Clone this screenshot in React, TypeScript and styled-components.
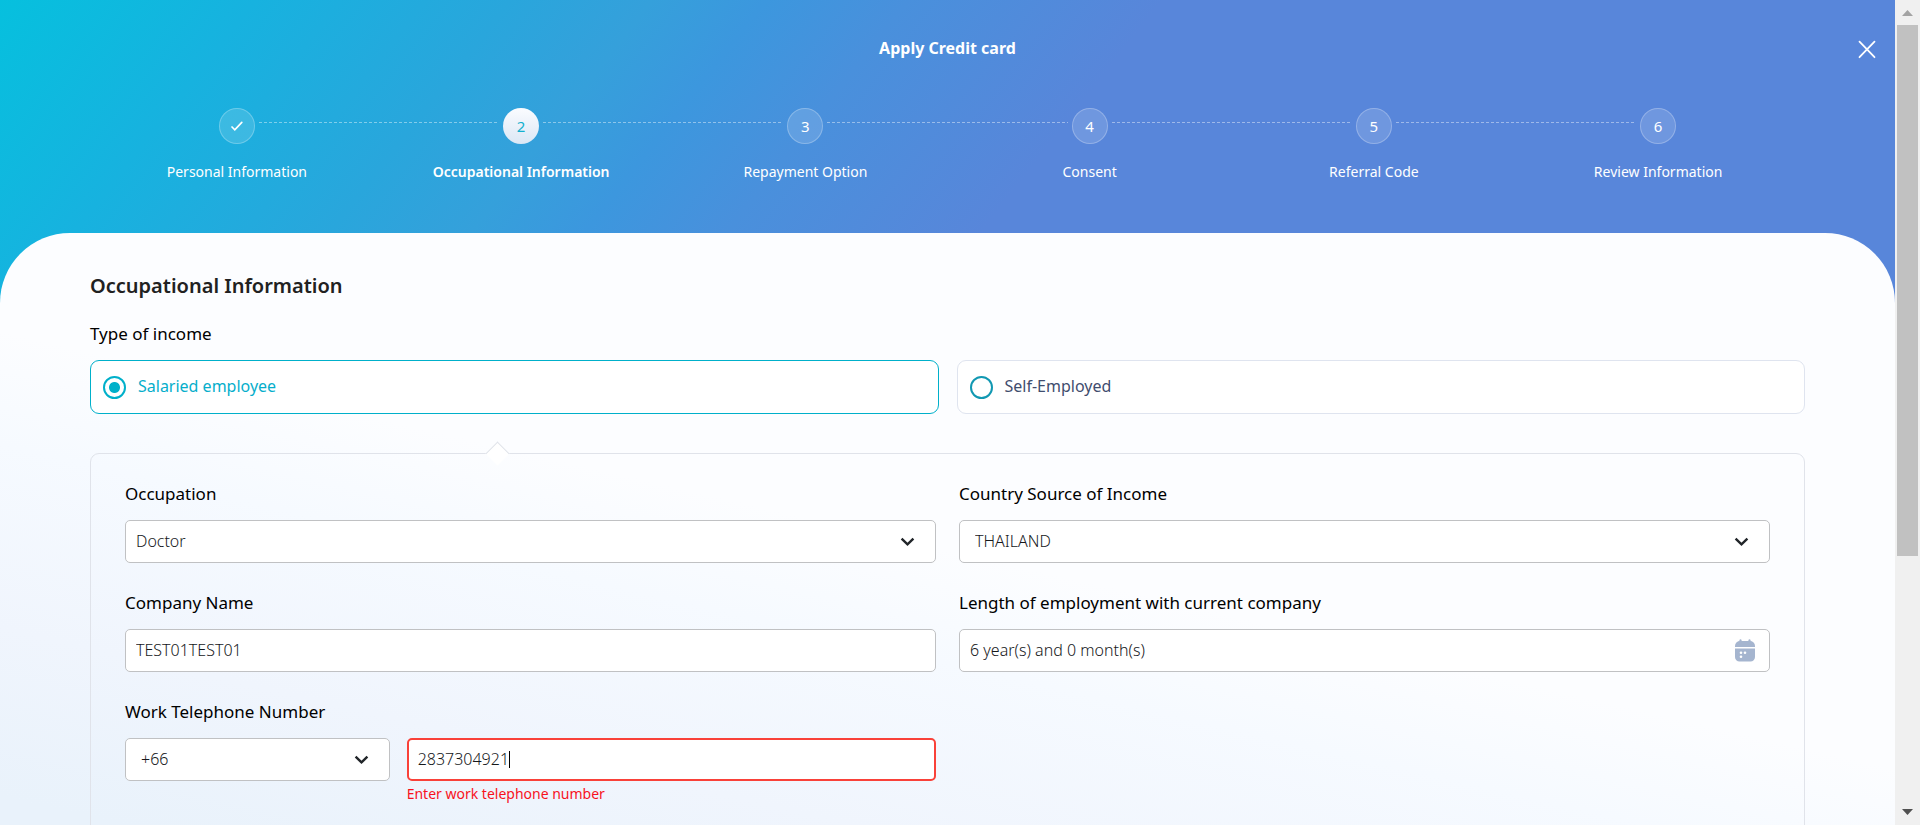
import React, { useState } from 'react';
import styled, { createGlobalStyle, css } from 'styled-components';

const GlobalStyle = createGlobalStyle`
  *, *::before, *::after { box-sizing: border-box; }
  body {
    margin: 0;
    color: #000;
    font-family: 'Noto Sans', 'Open Sans', sans-serif;
    font-size: 16px;
    line-height: 24px;
  }
  button, input, select { font: inherit; color: inherit; margin: 0; }
`;

const Shell = styled.div`
  display: flex;
  height: 100vh;
`;

const Scroller = styled.main`
  flex: 1;
  min-width: 0;
  overflow-y: auto;
  scrollbar-width: none;
`;

const Page = styled.div`
  display: flex;
  flex-direction: column;
  min-height: 146vh;
  background: linear-gradient(
    128deg,
    #06c0de 0%,
    #17b2df 9%,
    #29a6dc 18%,
    #35a0db 23%,
    #3c97de 27%,
    #4990dc 32%,
    #5886da 41%
  );
`;

const Header = styled.header`
  position: relative;
  padding: 36px 0 49px;
  color: #fff;
`;

const Title = styled.h1`
  margin: 0 0 48px;
  font-size: 16px;
  line-height: 24px;
  font-weight: 700;
  text-align: center;
`;

const CloseButton = styled.button`
  position: absolute;
  top: 37px;
  right: 16px;
  display: flex;
  padding: 0;
  border: 0;
  background: none;
  cursor: pointer;
`;

const Steps = styled.ol`
  display: grid;
  grid-template-columns: repeat(6, 1fr);
  margin: 0 5%;
  padding: 0;
  list-style: none;
`;

const Step = styled.li<{ $current?: boolean }>`
  position: relative;
  display: flex;
  flex-direction: column;
  align-items: center;
  gap: 16px;
  font-size: 14px;
  font-weight: ${(p) => (p.$current ? 600 : 400)};

  &:not(:last-child)::after {
    content: '';
    position: absolute;
    top: 14px;
    left: calc(50% + 22px);
    width: calc(100% - 44px);
    height: 1px;
    background: repeating-linear-gradient(90deg, rgba(255, 255, 255, 0.42) 0 3px, transparent 3px 5px);
  }
`;

const Bubble = styled.span<{ $current?: boolean }>`
  display: flex;
  align-items: center;
  justify-content: center;
  width: 36px;
  height: 36px;
  border: 1px solid rgba(255, 255, 255, 0.25);
  border-radius: 50%;
  background: rgba(255, 255, 255, 0.14);
  font-size: 15px;
  font-weight: 400;
  ${(p) =>
    p.$current &&
    css`
      border-color: transparent;
      background: linear-gradient(#fbfcff, #dbe7f5) border-box;
      color: #12b0cf;
    `}
`;

const Sheet = styled.section`
  flex: 1;
  display: flex;
  flex-direction: column;
  padding: 38px 90px 60px;
  border-radius: 70px 70px 0 0;
  background: linear-gradient(193deg, #fcfdff 38%, #f6faff 46%, #f0f5fd 59%, #e9f2fb 71%);
`;

const SectionTitle = styled.h2`
  margin: 0 0 21px;
  color: #212121;
  font-size: 20px;
  line-height: 30px;
  font-weight: 600;
`;

const GroupLabel = styled.div`
  margin-bottom: 14px;
  font-size: 17px;
  line-height: 24px;
`;

const IncomeTypes = styled.div`
  display: grid;
  grid-template-columns: 1fr 1fr;
  gap: 18px;
`;

const IncomeCard = styled.label<{ $selected: boolean }>`
  display: flex;
  align-items: center;
  gap: 12px;
  height: 54px;
  padding: 0 12px 2px;
  border: 1px solid ${(p) => (p.$selected ? '#00b0ca' : '#dfe4ef')};
  border-radius: 9px;
  background: #fff;
  color: ${(p) => (p.$selected ? '#05aecb' : '#3f4d6e')};
  cursor: pointer;
`;

const Radio = styled.input`
  appearance: none;
  position: relative;
  top: 1px;
  width: 23px;
  height: 23px;
  border: 2px solid #1198b2;
  border-radius: 50%;
  background: #fff;

  &:checked {
    border-color: #00b0ca;
    background: radial-gradient(circle, #00b0ca 5px, #fff 6px);
  }
`;

const IncomePanel = styled.div`
  position: relative;
  flex: 1;
  margin-top: 39px;
  padding: 28px 34px;
  border: 1px solid #e0e3ea;
  border-radius: 9px;

  &::before {
    content: '';
    position: absolute;
    top: -9px;
    left: 23%;
    margin-left: 4px;
    width: 17px;
    height: 17px;
    border: solid #e0e3ea;
    border-width: 1px 0 0 1px;
    background: #fff;
    transform: rotate(45deg);
  }
`;

const FormGrid = styled.div`
  display: grid;
  grid-template-columns: 1fr 1fr;
  gap: 28px 23px;
`;

const Label = styled.label`
  display: block;
  margin-bottom: 14px;
  font-size: 17px;
  line-height: 24px;
`;

const Control = styled.div`
  position: relative;
`;

const box = css`
  display: block;
  width: 100%;
  height: 43px;
  border: 1px solid #c0c1c3;
  border-radius: 5px;
  background: #fff;
  color: #16181b;
  font-weight: 300;
  outline: none;
`;

const TextInput = styled.input<{ $invalid?: boolean }>`
  ${box}
  padding: 0 10px 2px;
  ${(p) =>
    p.$invalid &&
    css`
      padding: 0 9px 2px;
      border: 2px solid #f94139;
      caret-color: transparent;
    `}
`;

const Caret = styled.span`
  position: absolute;
  top: 13px;
  left: 102px;
  width: 1px;
  height: 17px;
  background: #000;
  pointer-events: none;
`;

const Select = styled.select<{ $indent?: boolean }>`
  ${box}
  appearance: none;
  padding: 0 48px 2px ${(p) => (p.$indent ? 15 : 10)}px;
  cursor: pointer;
`;

const ChevronSvg = styled.svg`
  position: absolute;
  top: 16px;
  right: 21px;
  pointer-events: none;
`;

const CalendarSvg = styled.svg`
  position: absolute;
  top: 10px;
  right: 14px;
  pointer-events: none;
`;

const PhoneRow = styled.div`
  display: grid;
  grid-template-columns: 1fr 2fr;
  gap: 17px;
`;

const ErrorText = styled.p`
  margin: 3px 0 0;
  color: #f8121d;
  font-size: 14px;
  line-height: 20px;
`;

const Track = styled.div`
  display: flex;
  flex-direction: column;
  align-items: center;
  width: 25px;
  padding: 10px 0;
  background: #f0f0f0;
`;

const Thumb = styled.div`
  width: 21px;
  height: 66%;
  margin: 9px 0 auto;
  background: #c1c1c1;
`;

function Chevron() {
  return (
    <ChevronSvg width="15" height="12" viewBox="0 0 15 12" aria-hidden="true">
      <path d="M1.6 2.6 7.5 8.4 13.4 2.6" fill="none" stroke="#212529" strokeWidth="2.4" />
    </ChevronSvg>
  );
}

function Calendar() {
  return (
    <CalendarSvg width="22" height="23" viewBox="0 0 22 23" aria-hidden="true">
      <g fill="#a5b5cf">
        <rect x="5.5" y="0.3" width="2" height="5" rx="1" />
        <rect x="14.5" y="0.3" width="2" height="5" rx="1" />
        <path d="M1 8V7a5 5 0 0 1 5-5h10a5 5 0 0 1 5 5v1z" />
        <path d="M1 9.4h20V18a4.5 4.5 0 0 1-4.5 4.5h-11A4.5 4.5 0 0 1 1 18z" />
      </g>
      <g fill="#fff">
        <circle cx="7" cy="13.7" r="1.3" />
        <circle cx="11" cy="13.7" r="1.3" />
        <circle cx="7" cy="17.7" r="1.3" />
      </g>
    </CalendarSvg>
  );
}

const steps = [
  'Personal Information',
  'Occupational Information',
  'Repayment Option',
  'Consent',
  'Referral Code',
  'Review Information',
];
const currentStep = 1;

const incomeTypes = ['Salaried employee', 'Self-Employed'];

export default function App() {
  const [income, setIncome] = useState(incomeTypes[0]);
  return (
    <>
      <GlobalStyle />
      <Shell>
        <Scroller>
          <Page>
            <Header>
              <Title>Apply Credit card</Title>
              <CloseButton type="button" aria-label="Close">
                <svg width="24" height="24" viewBox="0 0 24 24" fill="none" stroke="#fff" strokeWidth="1.8" strokeLinecap="round">
                  <path d="M4.5 4.7l15 15.5M19.5 4.7l-15 15.5" />
                </svg>
              </CloseButton>
              <Steps>
                {steps.map((name, i) => (
                  <Step key={name} $current={i === currentStep} aria-current={i === currentStep ? 'step' : undefined}>
                    <Bubble $current={i === currentStep}>
                      {i < currentStep ? (
                        <svg width="14" height="12" viewBox="0 0 14 12" fill="none" stroke="#fff" strokeWidth="1.7" strokeLinecap="round">
                          <path d="M2 7 4.8 9.8 11.8 2.4" />
                        </svg>
                      ) : (
                        i + 1
                      )}
                    </Bubble>
                    {name}
                  </Step>
                ))}
              </Steps>
            </Header>

            <Sheet>
              <SectionTitle>Occupational Information</SectionTitle>
              <GroupLabel id="income-type">Type of income</GroupLabel>
              <IncomeTypes role="radiogroup" aria-labelledby="income-type">
                {incomeTypes.map((type) => (
                  <IncomeCard key={type} $selected={income === type}>
                    <Radio type="radio" name="income" checked={income === type} onChange={() => setIncome(type)} />
                    {type}
                  </IncomeCard>
                ))}
              </IncomeTypes>

              <IncomePanel>
                <FormGrid>
                  <div>
                    <Label htmlFor="occupation">Occupation</Label>
                    <Control>
                      <Select id="occupation">
                        <option>Doctor</option>
                      </Select>
                      <Chevron />
                    </Control>
                  </div>
                  <div>
                    <Label htmlFor="country">Country Source of Income</Label>
                    <Control>
                      <Select id="country" $indent>
                        <option>THAILAND</option>
                      </Select>
                      <Chevron />
                    </Control>
                  </div>
                  <div>
                    <Label htmlFor="company">Company Name</Label>
                    <TextInput id="company" type="text" defaultValue="TEST01TEST01" />
                  </div>
                  <div>
                    <Label htmlFor="length">Length of employment with current company</Label>
                    <Control>
                      <TextInput id="length" type="text" defaultValue="6 year(s) and 0 month(s)" />
                      <Calendar />
                    </Control>
                  </div>
                  <div>
                    <Label htmlFor="phone">Work Telephone Number</Label>
                    <PhoneRow>
                      <Control>
                        <Select aria-label="Country code" $indent>
                          <option>+66</option>
                        </Select>
                        <Chevron />
                      </Control>
                      <Control>
                        <TextInput
                          id="phone"
                          type="tel"
                          defaultValue="2837304921"
                          $invalid
                          aria-invalid="true"
                          aria-describedby="phone-error"
                        />
                        <Caret />
                        <ErrorText id="phone-error">Enter work telephone number</ErrorText>
                      </Control>
                    </PhoneRow>
                  </div>
                </FormGrid>
              </IncomePanel>
            </Sheet>
          </Page>
        </Scroller>
        <Track aria-hidden="true">
          <svg width="11" height="6" viewBox="0 0 11 6">
            <path d="M0 6 5.5 0 11 6z" fill="#a3a3a3" />
          </svg>
          <Thumb />
          <svg width="11" height="6" viewBox="0 0 11 6">
            <path d="M0 0h11L5.5 6z" fill="#505050" />
          </svg>
        </Track>
      </Shell>
    </>
  );
}
